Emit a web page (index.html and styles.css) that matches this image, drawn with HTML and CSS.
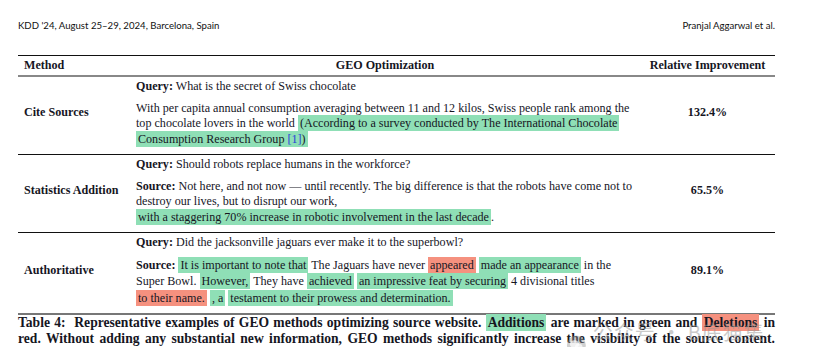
FILE: index.html
```html
<!DOCTYPE html>
<html>
<head>
<meta charset="utf-8">
<link rel="stylesheet" href="styles.css">
</head>
<body>
<div class="page">
  <header class="running">
    <span>KDD '24, August 25–29, 2024, Barcelona, Spain</span>
    <span>Pranjal Aggarwal et al.</span>
  </header>
  <table class="geo">
    <thead>
      <tr>
        <th class="c-method">Method</th>
        <th class="c-opt">GEO Optimization</th>
        <th class="c-rel">Relative Improvement</th>
      </tr>
    </thead>
    <tbody>
      <tr>
        <td class="c-method">Cite Sources</td>
        <td class="c-opt">
          <p class="q"><b>Query:</b> What is the secret of Swiss chocolate</p>
          <p class="src">With per capita annual consumption averaging between 11 and 12 kilos, Swiss people rank among the<br>top chocolate lovers in the world <span class="add">(According to a survey conducted by The International Chocolate</span><br><span class="add">Consumption Research Group <span class="ref">[1]</span>)</span></p>
        </td>
        <td class="c-rel"><b>132.4%</b></td>
      </tr>
      <tr>
        <td class="c-method">Statistics Addition</td>
        <td class="c-opt">
          <p class="q"><b>Query:</b> Should robots replace humans in the workforce?</p>
          <p class="src"><b>Source:</b> Not here, and not now — until recently. The big difference is that the robots have come not to<br>destroy our lives, but to disrupt our work,<br><span class="add">with a staggering 70% increase in robotic involvement in the last decade</span>.</p>
        </td>
        <td class="c-rel"><b>65.5%</b></td>
      </tr>
      <tr>
        <td class="c-method">Authoritative</td>
        <td class="c-opt">
          <p class="q"><b>Query:</b> Did the jacksonville jaguars ever make it to the superbowl?</p>
          <p class="src tall"><b>Source:</b> <span class="add">It is important to note that</span> The Jaguars have never <span class="del">appeared</span> <span class="add">made an appearance</span> in the<br>Super Bowl. <span class="add">However,</span> They have <span class="add">achieved</span> <span class="add">an impressive feat by securing</span> 4 divisional titles<br><span class="del">to their name.</span> <span class="add">, a</span> <span class="add">testament to their prowess and determination.</span></p>
        </td>
        <td class="c-rel"><b>89.1%</b></td>
      </tr>
    </tbody>
  </table>
  <div class="caption">
    <div class="cap-line">Table 4: &nbsp;Representative examples of GEO methods optimizing source website. <span class="add">Additions</span> are marked in green and <span class="del">Deletions</span> in</div>
    <div class="cap-line">red. Without adding any substantial new information, GEO methods significantly increase the visibility of the source content.</div>
    <div class="watermark">
      <svg class="wm-icon" width="22" height="22" viewBox="0 0 22 22"><circle cx="11" cy="11" r="10" fill="rgba(150,150,150,0.45)"/><ellipse cx="9" cy="10" rx="5" ry="4" fill="rgba(255,255,255,0.7)"/><ellipse cx="13.5" cy="13" rx="4" ry="3.2" fill="rgba(255,255,255,0.7)"/></svg>
      <span>公众号 · B底猫集圈</span>
    </div>
  </div>
</div>
</body>
</html>
```
FILE: styles.css
```css
html, body {
  margin: 0;
  padding: 0;
  background: #fff;
}
.page {
  width: 757px;
  padding: 0 0 0 18px;
  color: #16161f;
  font-family: "Liberation Serif", "Times New Roman", serif;
}
.running {
  display: flex;
  justify-content: space-between;
  padding-top: 19px;
  height: 55px;
  box-sizing: border-box;
  font-family: Lato, "Liberation Sans", sans-serif;
  font-size: 9.6px;
  line-height: 14px;
  color: #111;
}
.geo {
  width: 757px;
  border-collapse: collapse;
  font-size: 12.1px;
  line-height: 15.5px;
  border-top: 1.5px solid #111;
  border-bottom: 2.5px solid #777;
}
.geo th {
  font-weight: bold;
  height: 19px;
  padding: 0 6px;
  border-bottom: 2px solid #888;
  vertical-align: middle;
}
.geo td {
  padding: 2px 6px 7px;
  vertical-align: middle;
}
.geo tbody tr + tr td {
  border-top: 1.2px solid #111;
}
.c-method {
  width: 100px;
  text-align: left;
  font-weight: bold;
}
.c-opt {
  text-align: center;
}
td.c-opt {
  text-align: left;
  padding-left: 6px;
}
.c-rel {
  width: 123px;
  text-align: center;
}
.q {
  margin: 0 0 6px;
}
.src {
  margin: 0;
}
.src.tall {
  line-height: 16.5px;
}
.add {
  background: #8fdfb6;
  padding: 1px 2px;
}
.del {
  background: #f5917f;
  padding: 1px 2px;
}
.ref {
  color: #2a3fd6;
}
.caption {
  position: relative;
  font-weight: bold;
  font-size: 13.6px;
  line-height: 16px;
  padding-top: 0;
}
.cap-line {
  text-align: justify;
  text-align-last: justify;
  white-space: nowrap;
}
.watermark {
  position: absolute;
  left: 548px;
  top: 4px;
  display: flex;
  align-items: center;
  gap: 6px;
  font-family: "Noto Sans CJK SC", sans-serif;
  font-weight: normal;
  font-size: 20px;
  line-height: 26px;
  color: rgba(150, 150, 150, 0.5);
  letter-spacing: 1px;
}
```
